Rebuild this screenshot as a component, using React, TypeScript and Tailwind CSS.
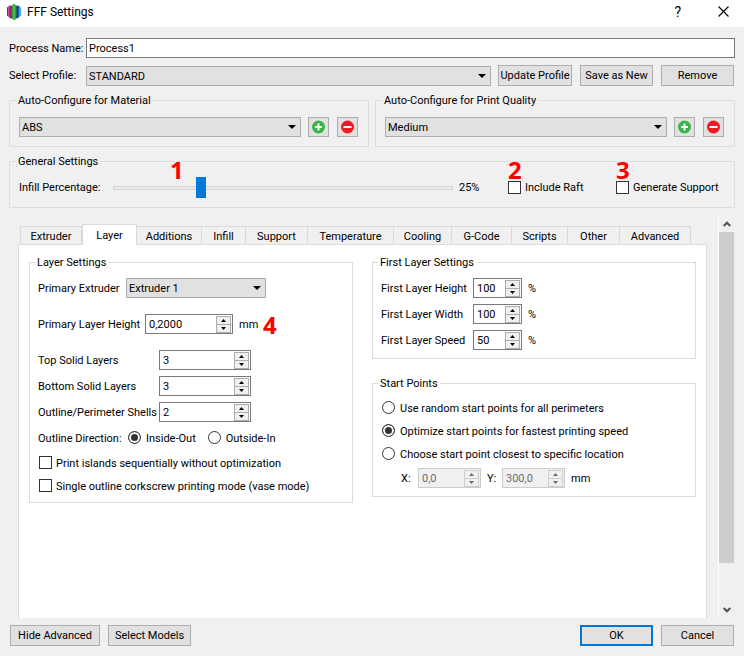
import { useState, type ReactNode } from 'react';
import clsx from 'clsx';

const tabs = [
  { name: 'Extruder', width: 'w-[62px]' },
  { name: 'Layer', width: 'w-[55px]' },
  { name: 'Additions', width: 'w-[65px]' },
  { name: 'Infill', width: 'w-[44px]' },
  { name: 'Support', width: 'w-[62px]' },
  { name: 'Temperature', width: 'w-[86px]' },
  { name: 'Cooling', width: 'w-[58px]' },
  { name: 'G-Code', width: 'w-[60px]' },
  { name: 'Scripts', width: 'w-[56px]' },
  { name: 'Other', width: 'w-[52px]' },
  { name: 'Advanced', width: 'w-[71px]' },
];

function Group({ title, className, children }: { title: string; className?: string; children: ReactNode }) {
  return (
    <fieldset className={clsx('min-w-0 border border-[#dcdcdc]', className)}>
      <legend className="-ml-[3px] h-[14px] px-[2px] leading-4">{title}</legend>
      {children}
    </fieldset>
  );
}

function Button({ className, children, label }: { className?: string; children: ReactNode; label?: string }) {
  return (
    <button
      type="button"
      aria-label={label}
      className={clsx('flex items-center justify-center whitespace-nowrap bg-[#e1e1e1]', className)}
    >
      {children}
    </button>
  );
}

function Select({ id, options, className, label }: { id: string; options: string[]; className?: string; label?: string }) {
  return (
    <div className={clsx('relative h-5', className)}>
      <select
        id={id}
        aria-label={label}
        className="block h-5 w-full appearance-none border border-[#adadad] bg-[#e1e1e1] pl-[2px] pr-5 pt-px leading-[18px]"
      >
        {options.map((o) => <option key={o}>{o}</option>)}
      </select>
      <svg className="pointer-events-none absolute right-[5px] top-[8px]" width="8" height="4" viewBox="0 0 8 4">
        <path d="M0 0h8L4 4z" fill="#000" />
      </svg>
    </div>
  );
}

function SpinBox({ id, value, disabled, className }: { id: string; value: string; disabled?: boolean; className?: string }) {
  const border = disabled ? 'border-[#cccccc]' : 'border-[#7a7a7a]';
  const arrow = disabled ? '#6d6d6d' : '#000';
  const step = clsx(
    'flex h-[9px] w-[15px] items-center justify-center border bg-[#f0f0f0]',
    disabled ? 'border-[#cfcfcf]' : 'border-[#adadad]'
  );
  return (
    <div className={clsx('flex h-5 shrink-0 items-center border pr-px', border, disabled ? 'bg-[#f0f0f0]' : 'bg-white', className)}>
      <input
        id={id}
        type="text"
        defaultValue={value}
        disabled={disabled}
        className="h-full w-0 min-w-0 flex-1 bg-transparent pl-[3px] outline-none disabled:text-[#6d6d6d]"
      />
      <div className="flex flex-col">
        <button type="button" disabled={disabled} aria-label="Increase" className={step}>
          <svg width="5" height="3" viewBox="0 0 5 3"><path d="M0 3h5L2.500 0z" fill={arrow} /></svg>
        </button>
        <button type="button" disabled={disabled} aria-label="Decrease" className={clsx(step, '-mt-px')}>
          <svg width="5" height="3" viewBox="0 0 5 3"><path d="M0 0h5L2.500 3z" fill={arrow} /></svg>
        </button>
      </div>
    </div>
  );
}

function CheckBox({ children }: { children: ReactNode }) {
  return (
    <label className="flex h-5 items-center gap-1 whitespace-nowrap">
      <input type="checkbox" className="mb-px size-[13px] shrink-0 appearance-none border border-[#333] bg-white checked:bg-[#333]" />
      {children}
    </label>
  );
}

function Radio({ name, checked, children }: { name: string; checked?: boolean; children: ReactNode }) {
  return (
    <label className="flex h-5 items-center gap-[5px] whitespace-nowrap">
      <input
        type="radio"
        name={name}
        defaultChecked={checked}
        className="mb-px size-[13px] shrink-0 appearance-none rounded-full border border-[#333] bg-white checked:bg-[#333] checked:shadow-[inset_0_0_0_2px_white]"
      />
      {children}
    </label>
  );
}

function AddRemove() {
  return (
    <div className="flex shrink-0 gap-2">
      <Button label="Add" className="h-5 w-[21px] border border-[#adadad]">
        <svg width="13" height="14" viewBox="0 0 13 14">
          <circle cx="6.500" cy="7" r="6.500" fill="#39b54a" />
          <path d="M6.500 3.500v7M3 7h7" stroke="#fff" strokeWidth="2" />
        </svg>
      </Button>
      <Button label="Remove" className="h-5 w-[21px] border border-[#adadad]">
        <svg width="13" height="14" viewBox="0 0 13 14">
          <circle cx="6.500" cy="7" r="6.500" fill="#ed1c24" />
          <path d="M2.500 7h8" stroke="#fff" strokeWidth="2" />
        </svg>
      </Button>
    </div>
  );
}

function Marker({ className, children }: { className: string; children: ReactNode }) {
  return (
    <span className={clsx('pointer-events-none absolute [font-family:Open_Sans,sans-serif] text-[24px] font-bold leading-6 text-[#ff0000]', className)}>
      {children}
    </span>
  );
}

function TitleBar() {
  return (
    <header className="flex h-[27px] items-center bg-white pl-[7px] pr-[15px]">
      <svg className="-mt-1" width="14" height="16" viewBox="0 0 14 16">
        <path d="M0 3.500 1.500 2.500v10L0 11.500z" fill="#8e1a5c" />
        <path d="M1.500 2Q3 1 4.500 2v12Q3 14.500 1.500 13z" fill="#d6147c" />
        <path d="M3.500 1.500 5 2v12l-1.500.5z" fill="#4b2a86" />
        <path d="M14 3.500 12.500 2.500v10L14 11.500z" fill="#36b4e8" />
        <path d="M12.500 2Q11 1 9.500 2v12q1.500.5 3-1z" fill="#1c5fb4" />
        <path d="M10.500 1.500 9 2v12l1.500.5z" fill="#1b2f7c" />
        <path d="M7 0C9.300 0 9.500 3.500 9.500 8s-.2 8-2.500 8-2.500-3.500-2.500-8 .2-8 2.500-8z" fill="#2e9e35" />
        <path d="M7 1v14" stroke="#5cc04d" strokeWidth="1.500" />
      </svg>
      <h1 className="mb-[2px] ml-[6px] flex-1 text-[12px]">FFF Settings</h1>
      <button type="button" aria-label="Help" className="mb-1 mr-[37px] text-[14px] leading-5">?</button>
      <button type="button" aria-label="Close" className="mb-1">
        <svg width="11" height="11" viewBox="0 0 11 11">
          <path d="M.5.5l10 10M10.500.5l-10 10" stroke="#000" strokeWidth="1.100" />
        </svg>
      </button>
    </header>
  );
}

function LayerSettings() {
  return (
    <Group title="Layer Settings" className="px-2 pb-[6px]">
      <div className="mt-[9px] flex items-center">
        <label htmlFor="extruder" className="w-[88px] whitespace-nowrap">Primary Extruder</label>
        <Select id="extruder" options={['Extruder 1']} className="w-[140px]" />
      </div>
      <div className="mt-4 flex items-center">
        <label htmlFor="layer-height" className="w-[107px] whitespace-nowrap">Primary Layer Height</label>
        <SpinBox id="layer-height" value="0,2000" className="w-[88px]" />
        <span className="relative ml-[6px]">
          mm
          <Marker className="-top-1 left-6">4</Marker>
        </span>
      </div>
      <div className="mt-4 flex flex-col gap-[6px]">
        <div className="flex items-center">
          <label htmlFor="top-layers" className="w-[121px] whitespace-nowrap">Top Solid Layers</label>
          <SpinBox id="top-layers" value="3" className="w-[92px]" />
        </div>
        <div className="flex items-center">
          <label htmlFor="bottom-layers" className="w-[121px] whitespace-nowrap">Bottom Solid Layers</label>
          <SpinBox id="bottom-layers" value="3" className="w-[92px]" />
        </div>
        <div className="flex items-center">
          <label htmlFor="shells" className="w-[121px] whitespace-nowrap">Outline/Perimeter Shells</label>
          <SpinBox id="shells" value="2" className="w-[92px]" />
        </div>
        <div className="flex items-center">
          <span className="w-[90px] whitespace-nowrap">Outline Direction:</span>
          <div className="flex gap-3">
            <Radio name="direction" checked>Inside-Out</Radio>
            <Radio name="direction">Outside-In</Radio>
          </div>
        </div>
      </div>
      <div className="mt-[5px] flex flex-col gap-[3px] pl-px">
        <CheckBox>Print islands sequentially without optimization</CheckBox>
        <CheckBox>Single outline corkscrew printing mode (vase mode)</CheckBox>
      </div>
    </Group>
  );
}

const firstLayer = [
  { name: 'Height', value: '100' },
  { name: 'Width', value: '100' },
  { name: 'Speed', value: '50' },
];

export default function App() {
  const [active, setActive] = useState('Layer');

  return (
    <div className="flex min-h-screen flex-col bg-[#f0f0f0] [font-family:Roboto,sans-serif] text-[11px] leading-[15px] text-black">
      <TitleBar />

      <main className="flex flex-1 flex-col gap-[7px] px-[9px] pb-[10px] pt-[11px]">
        <div className="flex items-center">
          <label htmlFor="process" className="w-[77px] shrink-0 whitespace-nowrap">Process Name:</label>
          <input id="process" type="text" defaultValue="Process1" className="h-5 min-w-0 flex-1 border border-[#7a7a7a] bg-white pl-[2px] outline-none" />
        </div>

        <div className="flex items-center pr-px">
          <label htmlFor="profile" className="w-[77px] shrink-0 whitespace-nowrap">Select Profile:</label>
          <Select id="profile" options={['STANDARD']} className="flex-1" />
          <div className="ml-[7px] flex gap-2">
            <Button className="h-[21px] w-[74px] border border-[#adadad]">Update Profile</Button>
            <Button className="h-[21px] w-[73px] border border-[#adadad]">Save as New</Button>
            <Button className="h-[21px] w-[73px] border border-[#adadad]">Remove</Button>
          </div>
        </div>

        <div className="grid grid-cols-2 gap-[6px]">
          <Group title="Auto-Configure for Material" className="px-[9px] pb-[9px]">
            <div className="mt-[10px] flex gap-[7px] pr-px">
              <Select id="material" label="Material" options={['ABS']} className="flex-1" />
              <AddRemove />
            </div>
          </Group>
          <Group title="Auto-Configure for Print Quality" className="px-[9px] pb-[9px]">
            <div className="mt-[10px] flex gap-[7px] pr-px">
              <Select id="quality" label="Print quality" options={['Medium']} className="flex-1" />
              <AddRemove />
            </div>
          </Group>
        </div>

        <Group title="General Settings" className="px-[9px] pb-[9px]">
          <div className="mt-[9px] flex items-center">
            <label htmlFor="infill" className="w-[94px] shrink-0 whitespace-nowrap">Infill Percentage:</label>
            <div className="relative flex min-w-0 flex-1 items-center">
              <input
                id="infill"
                type="range"
                defaultValue={25}
                className="h-[21px] w-full appearance-none bg-transparent [&::-webkit-slider-runnable-track]:h-1 [&::-webkit-slider-runnable-track]:border [&::-webkit-slider-runnable-track]:border-[#d6d6d6] [&::-webkit-slider-runnable-track]:bg-[#e7eaea] [&::-webkit-slider-thumb]:-mt-[10px] [&::-webkit-slider-thumb]:h-[21px] [&::-webkit-slider-thumb]:w-[10px] [&::-webkit-slider-thumb]:appearance-none [&::-webkit-slider-thumb]:bg-[#0078d7]"
              />
              <Marker className="-top-[19px] left-[57px]">1</Marker>
            </div>
            <output htmlFor="infill" className="ml-[6px] w-[49px]">25%</output>
            <div className="relative w-[108px]">
              <CheckBox>Include Raft</CheckBox>
              <Marker className="-top-5 left-0">2</Marker>
            </div>
            <div className="relative w-[109px]">
              <CheckBox>Generate Support</CheckBox>
              <Marker className="-top-5 left-0">3</Marker>
            </div>
          </div>
        </Group>

        <div className="flex flex-1">
          <div className="ml-[9px] flex flex-1 flex-col pt-[9px]">
            <div role="tablist" className="flex items-end pl-[2px]">
              {tabs.map((tab, i) => (
                <button
                  key={tab.name}
                  type="button"
                  role="tab"
                  aria-selected={tab.name === active}
                  onClick={() => setActive(tab.name)}
                  className={clsx(
                    'border-t border-[#d9d9d9]',
                    tab.width,
                    i === 0 && 'border-l',
                    tab.name === active ? 'relative -mb-px h-[21px] border-x bg-white' : 'h-[18px] border-r pt-px'
                  )}
                >
                  {tab.name}
                </button>
              ))}
            </div>

            <div className="grid flex-1 grid-cols-2 items-start gap-[19px] border border-b-0 border-[#dcdcdc] bg-white p-[10px]">
              <LayerSettings />

              <div className="flex flex-col gap-[17px]">
                <Group title="First Layer Settings" className="px-2 pb-2">
                  <div className="mt-[9px] flex flex-col gap-[6px]">
                    {firstLayer.map((row) => (
                      <div key={row.name} className="flex items-center">
                        <label htmlFor={row.name} className="w-[92px] whitespace-nowrap">First Layer {row.name}</label>
                        <SpinBox id={row.name} value={row.value} className="w-[49px]" />
                        <span className="ml-[6px]">%</span>
                      </div>
                    ))}
                  </div>
                </Group>

                <Group title="Start Points" className="px-2 pb-2">
                  <div className="mt-2 flex flex-col gap-[3px] pl-px">
                    <Radio name="start">Use random start points for all perimeters</Radio>
                    <Radio name="start" checked>Optimize start points for fastest printing speed</Radio>
                    <Radio name="start">Choose start point closest to specific location</Radio>
                  </div>
                  <div className="mt-1 flex items-center pl-5">
                    <label htmlFor="start-x" className="w-[17px]">X:</label>
                    <SpinBox id="start-x" value="0,0" disabled className="w-[63px]" />
                    <label htmlFor="start-y" className="ml-[6px] w-[15px]">Y:</label>
                    <SpinBox id="start-y" value="300,0" disabled className="w-[63px]" />
                    <span className="ml-[6px]">mm</span>
                  </div>
                </Group>
              </div>
            </div>
          </div>

          {/* Scroll bar */}
          <div className="ml-[11px] flex w-[17px] flex-col items-center border-l border-white">
            <div className="flex h-[17px] items-center">
              <svg width="8" height="6" viewBox="0 0 8 6"><path d="M.7 5 4 1.700 7.300 5" fill="none" stroke="#505050" strokeWidth="2" /></svg>
            </div>
            <div className="w-full flex-1 pb-[38px]">
              <div className="h-full w-[15px] bg-[#cdcdcd]" />
            </div>
            <div className="flex h-[17px] items-center">
              <svg width="8" height="6" viewBox="0 0 8 6"><path d="M.7 1 4 4.300 7.300 1" fill="none" stroke="#505050" strokeWidth="2" /></svg>
            </div>
          </div>
        </div>

        <footer className="flex gap-2 px-px">
          <Button className="h-[21px] w-[90px] border border-[#adadad]">Hide Advanced</Button>
          <Button className="h-[21px] w-[83px] border border-[#adadad]">Select Models</Button>
          <Button className="ml-auto h-[21px] w-[73px] border-2 border-[#0078d7]">OK</Button>
          <Button className="h-[21px] w-[73px] border border-[#adadad]">Cancel</Button>
        </footer>
      </main>
    </div>
  );
}
